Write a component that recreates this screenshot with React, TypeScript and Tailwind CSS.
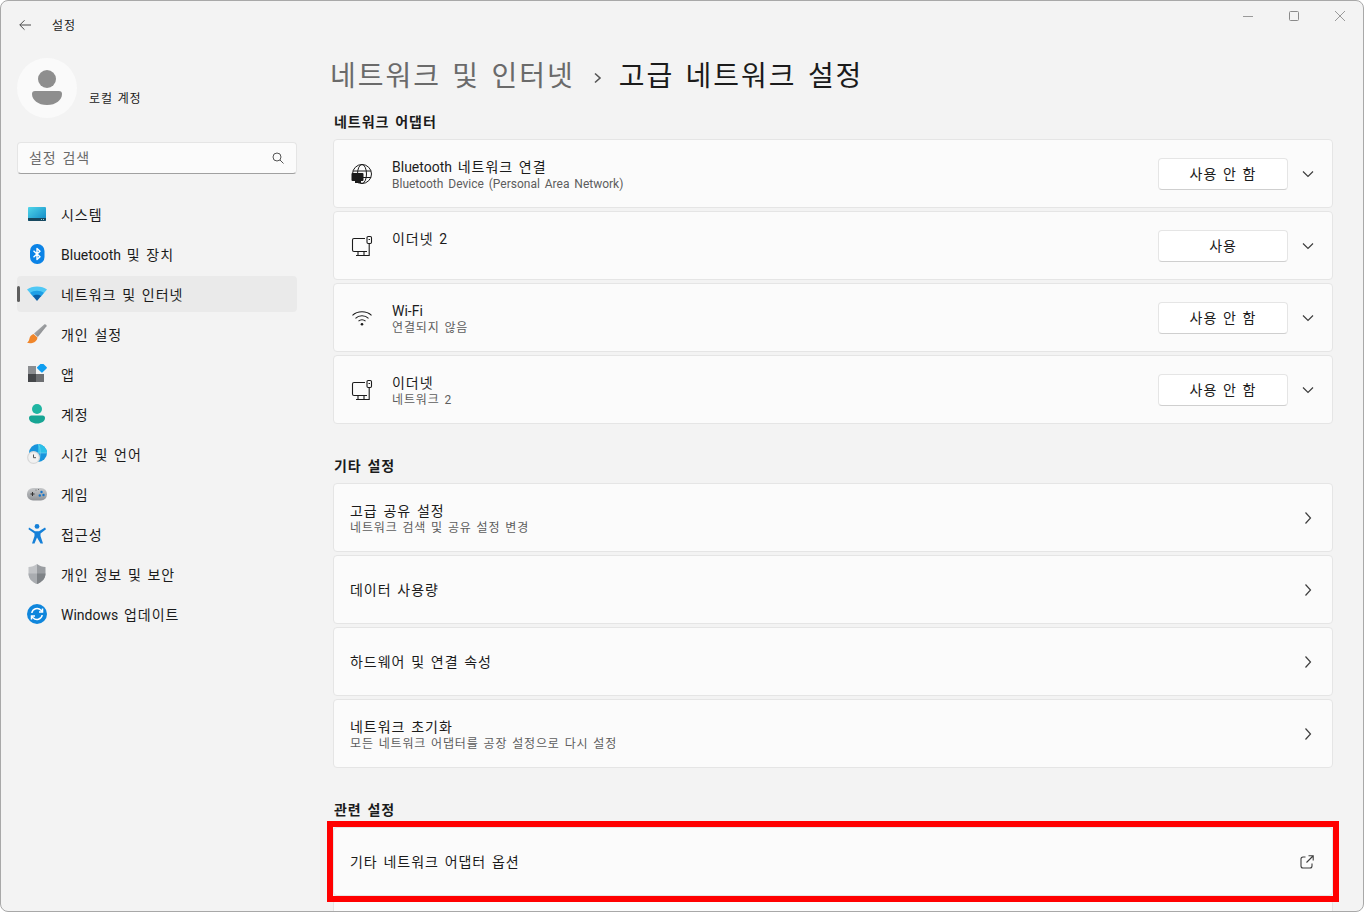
import React from "react";

const FONT = "[font-family:Roboto,'Noto_Sans_CJK_KR',sans-serif]";

function T({ children }: { children: string }) {
  const parts = children.split(/([\uac00-\ud7a3]+)/);
  return (
    <span className="[word-spacing:0.16em]">
      {parts.map((p, i) =>
        i % 2 === 1 ? (
          <span key={i} className="tracking-[0.07em]">
            {p}
          </span>
        ) : (
          <span key={i}>{p}</span>
        ),
      )}
    </span>
  );
}

function SystemIcon() {
  return (
    <svg width="20" height="20" viewBox="0 0 20 20">
      <defs>
        <linearGradient id="sys" x1="0" y1="0" x2="1" y2="1">
          <stop offset="0" stopColor="#4fd6ea" />
          <stop offset="1" stopColor="#0f86c4" />
        </linearGradient>
      </defs>
      <rect x="1" y="3" width="18" height="14" rx="1" fill="url(#sys)" />
      <path d="M1 14h18v2a1 1 0 0 1-1 1H2a1 1 0 0 1-1-1z" fill="#17485f" />
      <rect x="14" y="15" width="1" height="1" fill="#9cc" />
      <rect x="16" y="15" width="1" height="1" fill="#9cc" />
    </svg>
  );
}
function BluetoothIcon() {
  return (
    <svg width="20" height="20" viewBox="0 0 20 20">
      <rect x="3" y="0" width="14.5" height="20" rx="7" fill="#0b83e6" />
      <path d="M6.5 6.8l6.5 6-3 2.8V4.4l3 2.8-6.5 6" fill="none" stroke="#fff" strokeWidth="1.4" strokeLinejoin="round" />
    </svg>
  );
}
function WifiColorIcon() {
  return (
    <svg width="20" height="20" viewBox="0 0 20 20">
      <path d="M0 5.6C2.6 3.6 6 2.5 10 2.500s7.400 1.100 10 3.100l-3 3.400H3z" fill="#4fc8f5" />
      <path d="M3 9C4.800 7.700 7.200 6.800 10 6.800S15.200 7.700 17 9l-3 3.400H6z" fill="#1e9fe6" />
      <path d="M5.800 12.100C7 11.200 8.400 10.800 10 10.800s3 .4 4.200 1.300L10 17z" fill="#0a5fa8" />
    </svg>
  );
}
function BrushIcon() {
  return (
    <svg width="20" height="20" viewBox="0 0 20 20">
      <defs>
        <linearGradient id="bh" x1="0" y1="0" x2="1" y2="1">
          <stop offset="0" stopColor="#b9bbbd" />
          <stop offset="1" stopColor="#77797c" />
        </linearGradient>
      </defs>
      <path d="M17.500.3c1-.6 2.600.9 2 2L10.800 13 7 9.500z" fill="url(#bh)" />
      <path d="M6.500 10l4 3.500c-.3 2.700-2.200 5-5.200 5.500-1.900.3-3.900.2-5.300-.2 1.500-1 2-2.300 2.400-4 .5-2.500 2-4.200 4.100-4.800z" fill="#f0862a" />
    </svg>
  );
}
function AppsIcon() {
  return (
    <svg width="20" height="20" viewBox="0 0 20 20">
      <rect x="1" y="2" width="8" height="8" fill="#8b8d90" />
      <rect x="1" y="10" width="8" height="8" fill="#45474a" />
      <rect x="9" y="10" width="8" height="8" fill="#6d6f72" />
      <rect x="11.200" y="0" width="7.500" height="7.500" rx="1" transform="rotate(45 14.950 3.750)" fill="#0f9ef0" />
    </svg>
  );
}
function AccountIcon() {
  return (
    <svg width="20" height="20" viewBox="0 0 20 20">
      <circle cx="10" cy="5" r="5" fill="#1fb5a2" />
      <path d="M2 14a2.500 2.500 0 0 1 2.500-2.500h11A2.500 2.500 0 0 1 18 14c0 3.200-3.500 5.500-8 5.500S2 17.200 2 14z" fill="#17a594" />
    </svg>
  );
}
function TimeIcon() {
  return (
    <svg width="20" height="20" viewBox="0 0 20 20">
      <circle cx="11" cy="9" r="9" fill="#1894dc" />
      <path d="M11 0a9 9 0 0 1 9 9h-9z" fill="#2cc0e8" />
      <path d="M4 9h16M11 0c3 2.500 3 15 0 18" stroke="#7fd4f0" strokeWidth=".6" fill="none" />
      <circle cx="6.500" cy="13.500" r="6.500" fill="#d8d8d8" />
      <circle cx="6.500" cy="13.500" r="5.200" fill="#f1f1f1" />
      <path d="M6.500 10.500v3.200h2.500" stroke="#555" strokeWidth="1" fill="none" />
    </svg>
  );
}
function GameIcon() {
  return (
    <svg width="20" height="20" viewBox="0 0 20 20">
      <defs>
        <linearGradient id="gm" x1="0" y1="0" x2="0" y2="1">
          <stop offset="0" stopColor="#c6c8ca" />
          <stop offset="1" stopColor="#8f9296" />
        </linearGradient>
      </defs>
      <rect x="0" y="4" width="20" height="12.500" rx="6" fill="url(#gm)" />
      <path d="M3.500 10h4M5.500 8v4" stroke="#333" strokeWidth="1" />
      <circle cx="14.500" cy="8" r="1.200" fill="#1273c8" />
      <circle cx="12.800" cy="11.500" r="1.200" fill="#1273c8" />
      <circle cx="16.500" cy="11" r="1.200" fill="#1273c8" />
      <circle cx="9" cy="6" r=".5" fill="#555" />
      <circle cx="11.500" cy="5.500" r=".5" fill="#555" />
    </svg>
  );
}
function AccessIcon() {
  return (
    <svg width="20" height="20" viewBox="0 0 20 20">
      <circle cx="10" cy="2.400" r="2.400" fill="#1580d8" />
      <path d="M2 3.500l6 3.700h4l6-3.700 1 1.700-5.500 4.300v2.500l2.500 7.500h-2.500L10 13.500 7.500 19.500H5l2.500-7.500V9.500L1.500 5.200z" fill="#1580d8" />
    </svg>
  );
}
function ShieldIcon() {
  return (
    <svg width="20" height="20" viewBox="0 0 20 20">
      <path d="M10 0c2.500 2 5.500 2.800 8.500 3v6.500c0 5-3.500 8.500-8.500 10.500z" fill="#9a9da1" />
      <path d="M10 0C7.500 2 4.500 2.800 1.500 3v6.500C1.500 14.500 5 18 10 20z" fill="#c1c3c6" />
      <path d="M1.500 9.500H10V20C5 18 1.500 14.500 1.500 9.500z" fill="#a9acb0" />
      <path d="M18.500 9.500H10V20c5-2 8.500-5.500 8.500-10.500z" fill="#7f8387" />
    </svg>
  );
}
function UpdateIcon() {
  return (
    <svg width="20" height="20" viewBox="0 0 20 20">
      <circle cx="10" cy="10" r="10" fill="#0f86dc" />
      <path d="M4.800 9a5.300 5.300 0 0 1 9.200-2.700l1 1.200M15.200 11a5.300 5.300 0 0 1-9.200 2.700l-1-1.200" fill="none" stroke="#fff" strokeWidth="1.500" />
      <path d="M15.500 4.500v3.500H12M4.500 15.500V12H8" fill="none" stroke="#fff" strokeWidth="1.500" />
    </svg>
  );
}

function GlobeDeviceIcon() {
  return (
    <svg width="22" height="22" viewBox="0 0 22 22" fill="none" stroke="#1b1b1b" strokeWidth="1">
      <circle cx="11" cy="11" r="9.500" />
      <ellipse cx="11" cy="11" rx="4.500" ry="9.500" />
      <path d="M2 8h18M2 14.500h18" />
      <rect x="0.500" y="10" width="12" height="8" rx="1" fill="#1b1b1b" stroke="none" />
      <rect x="4" y="18" width="6" height="2" fill="#1b1b1b" stroke="none" />
    </svg>
  );
}
function EthernetIcon() {
  return (
    <svg width="22" height="22" viewBox="0 0 22 22" fill="none" stroke="#1b1b1b" strokeWidth="1.100">
      <path d="M14 3.500H3A1.500 1.500 0 0 0 1.500 5v10A1.500 1.500 0 0 0 3 16.500h13" />
      <path d="M5 20.500h13M7 16.500v4M13 16.500v4" />
      <rect x="16" y="1.500" width="4.500" height="7" rx="1.200" />
      <path d="M18.200 8.500V21" />
      <path d="M17.500 4.500h1.500" />
    </svg>
  );
}
function WifiLineIcon() {
  return (
    <svg width="22" height="22" viewBox="0 0 22 22" fill="none" stroke="#1b1b1b" strokeWidth="1.100">
      <path d="M1.500 8.300C4 6 7.300 4.800 11 4.800s7 1.200 9.500 3.500" />
      <path d="M4.500 11.300C6.300 9.600 8.500 8.800 11 8.800s4.700.8 6.500 2.500" />
      <path d="M7.500 14.200c1-.9 2.200-1.400 3.500-1.400s2.500.5 3.500 1.400" />
      <circle cx="11" cy="17.300" r="1.300" fill="#1b1b1b" stroke="none" />
    </svg>
  );
}
function Chevron({ dir }: { dir: "down" | "right" }) {
  return (
    <svg width="12" height="12" viewBox="0 0 12 12" fill="none" stroke="#3d3d3d" strokeWidth="1.200">
      {dir === "down" ? <path d="M1 3.500l5 5 5-5" /> : <path d="M3.500 .5l5 5.500-5 5.500" />}
    </svg>
  );
}
function ExternalIcon() {
  return (
    <svg width="14" height="14" viewBox="0 0 14 14" fill="none" stroke="#3d3d3d" strokeWidth="1.100">
      <path d="M5.500 2H3A2 2 0 0 0 1 4v7a2 2 0 0 0 2 2h7a2 2 0 0 0 2-2V8.500" />
      <path d="M6.500 7.500L13 1M8.500 .8H13.200V5.500" />
    </svg>
  );
}

const navItems: { label: string; icon: React.ReactNode; active?: boolean }[] = [
  { label: "시스템", icon: <SystemIcon /> },
  { label: "Bluetooth 및 장치", icon: <BluetoothIcon /> },
  { label: "네트워크 및 인터넷", icon: <WifiColorIcon />, active: true },
  { label: "개인 설정", icon: <BrushIcon /> },
  { label: "앱", icon: <AppsIcon /> },
  { label: "계정", icon: <AccountIcon /> },
  { label: "시간 및 언어", icon: <TimeIcon /> },
  { label: "게임", icon: <GameIcon /> },
  { label: "접근성", icon: <AccessIcon /> },
  { label: "개인 정보 및 보안", icon: <ShieldIcon /> },
  { label: "Windows 업데이트", icon: <UpdateIcon /> },
];

function Card({
  title,
  sub,
  icon,
  right,
  topAligned,
}: {
  title: string;
  sub?: string;
  icon?: React.ReactNode;
  right: React.ReactNode;
  topAligned?: boolean;
}) {
  return (
    <div className="flex h-[69px] shrink-0 items-center rounded-[4px] border border-[#e5e5e5] bg-[#fbfbfb] pr-[18px] pl-[16px]">
      {icon && <div className="mr-[19px] ml-[1px] flex w-[22px] shrink-0 items-center justify-center">{icon}</div>}
      <div className={`flex min-w-0 flex-1 flex-col ${sub ? "pt-[3px]" : "pt-[1px]"} ${topAligned ? "mb-[14px]" : ""}`}>
        <div className="text-[14px] leading-[17px] text-[#1b1b1b]">
          <T>{title}</T>
        </div>
        {sub && (
          <div className="mt-[1px] text-[12px] leading-[15px] text-[#5d5d5d]">
            <T>{sub}</T>
          </div>
        )}
      </div>
      {right}
    </div>
  );
}

function AdapterRight({ label }: { label: string }) {
  return (
    <div className="flex items-center">
      <div className="flex h-[32px] w-[130px] items-center justify-center rounded-[4px] border border-[#e5e5e5] border-b-[#cfcfcf] bg-white pt-[2px] text-[14px] text-[#1b1b1b]">
        <T>{label}</T>
      </div>
      <div className="ml-[14px] flex w-[12px] items-center justify-center">
        <Chevron dir="down" />
      </div>
    </div>
  );
}

function SectionTitle({ children }: { children: string }) {
  return (
    <div className="h-[17px] shrink-0 pl-[1px] text-[14px] leading-[17px] font-semibold text-[#1b1b1b]">
      <T>{children}</T>
    </div>
  );
}

export default function App() {
  return (
    <div className={`relative h-[912px] w-[1364px] overflow-hidden bg-white ${FONT}`}>
      <div className="flex h-[912px] w-[1364px] overflow-hidden rounded-[8px] border border-[#a8a8a8] bg-[#f3f3f3]">
        <aside className="flex w-[296px] shrink-0 flex-col pl-[16px]">
          <div className="flex h-[48px] shrink-0 items-center">
            <svg className="ml-[2px]" width="12" height="12" viewBox="0 0 12 12" fill="none" stroke="#4a4a4a" strokeWidth="1">
              <path d="M12 6H.8M5.500 1.300L.8 6l4.700 4.700" />
            </svg>
            <span className="mt-[2px] ml-[21px] text-[12px] text-[#1b1b1b]">
              <T>설정</T>
            </span>
          </div>
          <div className="mt-[9px] flex h-[60px] shrink-0 items-center">
            <div className="flex h-[60px] w-[60px] items-center justify-center rounded-full bg-[#fafafa]">
              <svg width="30" height="36" viewBox="0 0 30 36">
                <circle cx="15" cy="9" r="9" fill="#8e8e8e" />
                <path d="M0 24a3 3 0 0 1 3-3h24a3 3 0 0 1 3 3c0 6-6 11-15 11S0 30 0 24z" fill="#8e8e8e" />
              </svg>
            </div>
            <span className="mt-[21px] ml-[12px] text-[12px] text-[#1b1b1b]">
              <T>로컬 계정</T>
            </span>
          </div>
          <div className="mt-[24px] flex h-[32px] w-[280px] shrink-0 items-center justify-between rounded-[4px] border border-[#e5e5e5] border-b-[#a0a0a0] bg-[#fbfbfb] pr-[12px] pl-[11px]">
            <span className="text-[14px] text-[#6a6a6a]">
              <T>설정 검색</T>
            </span>
            <svg width="12" height="12" viewBox="0 0 12 12" fill="none" stroke="#555" strokeWidth="1">
              <circle cx="5" cy="5" r="4" />
              <path d="M8 8l3.500 3.500" />
            </svg>
          </div>
          <nav className="mt-[22px] flex w-[280px] flex-col gap-[4px]">
            {navItems.map((n) => (
              <div
                key={n.label}
                className={`relative flex h-[36px] items-center rounded-[4px] pl-[10px] ${n.active ? "bg-[#eaeaea]" : ""}`}
              >
                {n.active && <div className="absolute top-[10px] left-0 h-[16px] w-[3px] rounded-[2px] bg-[#5f5f5f]" />}
                {n.icon}
                <span className="mt-[2px] ml-[14px] text-[14px] text-[#1b1b1b]">
                  <T>{n.label}</T>
                </span>
              </div>
            ))}
          </nav>
        </aside>
        <main className="flex min-w-0 flex-1 flex-col pl-[36px]">
          <div className="flex h-[57px] shrink-0 items-start justify-end pt-[10px]">
            <div className="mr-[18px] flex items-center gap-[36px]">
              <svg width="10" height="10" viewBox="0 0 10 10" stroke="#9a9a9a" strokeWidth="1" fill="none"><path d="M0 5.500h10" /></svg>
              <svg width="10" height="10" viewBox="0 0 10 10" stroke="#8a8a8a" strokeWidth="1" fill="none"><rect x=".5" y=".5" width="9" height="9" rx="1" /></svg>
              <svg width="10" height="10" viewBox="0 0 10 10" stroke="#9a9a9a" strokeWidth="1" fill="none"><path d="M0 0l10 10M10 0L0 10" /></svg>
            </div>
          </div>
          <div className="mt-[3px] -ml-[3px] flex h-[32px] shrink-0 items-center text-[28px] leading-[32px]">
            <span className="text-[#6a6a6a]">
              <T>네트워크 및 인터넷</T>
            </span>
            <svg className="mt-[1px] mr-[16px] ml-[18px]" width="10" height="12" viewBox="0 0 10 12" fill="none" stroke="#555" strokeWidth="1.600"><path d="M2 1.500L7 6l-5 4.500" /></svg>
            <span className="text-[#1b1b1b]">
              <T>고급 네트워크 설정</T>
            </span>
          </div>
          <div className="mt-[21px] flex w-[1000px] shrink-0 flex-col">
            <SectionTitle>네트워크 어댑터</SectionTitle>
            <div className="mt-[8px] flex flex-col gap-[3px]">
              <Card title="Bluetooth 네트워크 연결" sub="Bluetooth Device (Personal Area Network)" icon={<GlobeDeviceIcon />} right={<AdapterRight label="사용 안 함" />} />
              <Card title="이더넷 2" icon={<EthernetIcon />} right={<AdapterRight label="사용" />} topAligned />
              <Card title="Wi-Fi" sub="연결되지 않음" icon={<WifiLineIcon />} right={<AdapterRight label="사용 안 함" />} />
              <Card title="이더넷" sub="네트워크 2" icon={<EthernetIcon />} right={<AdapterRight label="사용 안 함" />} />
            </div>
            <div className="mt-[34px]">
              <SectionTitle>기타 설정</SectionTitle>
            </div>
            <div className="mt-[8px] flex flex-col gap-[3px]">
              <Card title="고급 공유 설정" sub="네트워크 검색 및 공유 설정 변경" right={<Chevron dir="right" />} />
              <Card title="데이터 사용량" right={<Chevron dir="right" />} />
              <Card title="하드웨어 및 연결 속성" right={<Chevron dir="right" />} />
              <Card title="네트워크 초기화" sub="모든 네트워크 어댑터를 공장 설정으로 다시 설정" right={<Chevron dir="right" />} />
            </div>
            <div className="mt-[34px]">
              <SectionTitle>관련 설정</SectionTitle>
            </div>
            <div className="mt-[8px] flex flex-col gap-[3px]">
              <Card title="기타 네트워크 어댑터 옵션" right={<ExternalIcon />} />
              <Card title="" right={null} />
            </div>
          </div>
        </main>
      </div>
      <div className="absolute top-[821px] left-[327px] h-[81px] w-[1012px] border-[6px] border-[#ff0000]" />
    </div>
  );
}
